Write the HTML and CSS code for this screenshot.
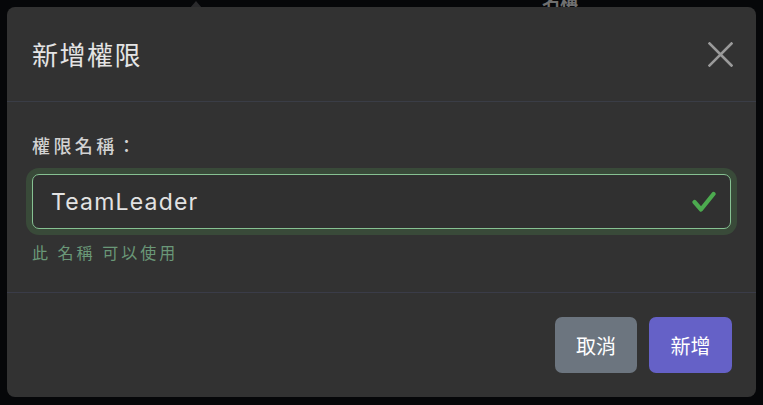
FILE: index.html
```html
<!DOCTYPE html>
<html lang="zh-Hant">
<head>
<meta charset="utf-8">
<title>新增權限</title>
<link rel="stylesheet" href="styles.css">
</head>
<body>
<div class="backdrop">
  <span class="bg-arrow"></span>
  <span class="bg-text">名稱</span>
</div>
<div class="modal">
  <div class="modal-header">
    <h2 class="modal-title">新增權限</h2>
    <button class="close-btn" aria-label="close">
      <svg width="25" height="25" viewBox="0 0 25 25"><path d="M1.5 1.5 L23.5 23.5 M23.5 1.5 L1.5 23.5" stroke="#9a9a9a" stroke-width="2.6" stroke-linecap="square" fill="none"/></svg>
    </button>
  </div>
  <div class="modal-body">
    <label class="field-label">權限名稱：</label>
    <div class="input-wrap">
      <input class="name-input" type="text" value="TeamLeader">
      <svg class="check" width="24" height="22" viewBox="0 0 24 22"><path d="M2.5 11 L9 18.5 L21.5 3" stroke="#4caa4f" stroke-width="4.2" stroke-linecap="round" stroke-linejoin="round" fill="none"/></svg>
    </div>
    <div class="help-text">此 名稱 可以使用</div>
  </div>
  <div class="modal-footer">
    <button class="btn btn-cancel">取消</button>
    <button class="btn btn-primary">新增</button>
  </div>
</div>
</body>
</html>
```
FILE: styles.css
```css
html, body {
  margin: 0;
  padding: 0;
  width: 763px;
  height: 405px;
  overflow: hidden;
  background: #060709;
  font-family: "Noto Sans CJK TC", "Noto Sans", sans-serif;
}
body {
  position: relative;
  padding-top: 7px;
  box-sizing: border-box;
}
.backdrop {
  position: absolute;
  left: 0;
  top: 0;
  width: 763px;
  height: 10px;
}
.bg-arrow {
  position: absolute;
  left: 190px;
  top: 1px;
  width: 0;
  height: 0;
  border-left: 6px solid transparent;
  border-right: 6px solid transparent;
  border-bottom: 7px solid #2a2a2c;
}
.bg-text {
  position: absolute;
  left: 542px;
  top: -12px;
  font-size: 18px;
  font-weight: 700;
  color: #6f6f6f;
  line-height: 24px;
}
.modal {
  position: relative;
  margin: 0 auto;
  width: 749px;
  height: 390px;
  background: #323232;
  border-radius: 8px;
  display: flex;
  flex-direction: column;
  box-sizing: border-box;
}
.modal-header {
  height: 95px;
  box-sizing: border-box;
  border-bottom: 1px solid #3a3d46;
  display: flex;
  align-items: center;
  justify-content: space-between;
  padding: 0 23px 0 25px;
}
.modal-title {
  margin: 0;
  font-size: 26px;
  font-weight: 400;
  letter-spacing: 1.5px;
  color: #e4e4e4;
  line-height: 34px;
}
.close-btn {
  background: none;
  border: none;
  padding: 0;
  width: 25px;
  height: 25px;
  display: flex;
}
.modal-body {
  padding: 30px 25px 28px;
  border-bottom: 1px solid #3a3c48;
  display: flex;
  flex-direction: column;
}
.field-label {
  font-size: 18px;
  line-height: 26px;
  letter-spacing: 3.4px;
  color: #d2d2d2;
  font-weight: 500;
  margin-bottom: 16px;
}
.input-wrap {
  position: relative;
  height: 55px;
}
.name-input {
  width: 100%;
  height: 55px;
  box-sizing: border-box;
  background: #303030;
  border: 1px solid #86c192;
  border-radius: 7px;
  box-shadow: 0 0 0 6px #394a39;
  padding: 0 18px;
  font-family: "Inter", "Noto Sans", sans-serif;
  font-size: 23px;
  letter-spacing: 1.2px;
  color: #e2e2e2;
  outline: none;
}
.check {
  position: absolute;
  right: 15px;
  top: 17px;
}
.help-text {
  margin-top: 11px;
  font-size: 16px;
  line-height: 24px;
  letter-spacing: 3px;
  color: #6a9878;
}
.modal-footer {
  flex: 1;
  display: flex;
  justify-content: flex-end;
  align-items: center;
  gap: 12px;
  padding: 0 24px;
}
.btn {
  height: 56px;
  border: none;
  border-radius: 7px;
  padding: 0 20px;
  font-family: "Noto Sans CJK TC", sans-serif;
  font-size: 20px;
  color: #ffffff;
  min-width: 82px;
}
.btn-cancel {
  background: #6c757f;
}
.btn-primary {
  background: #6561c7;
  min-width: 83px;
}
```
